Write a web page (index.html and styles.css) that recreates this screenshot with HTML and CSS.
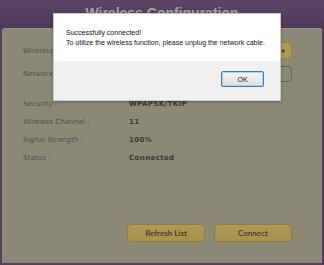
FILE: index.html
```html
<!DOCTYPE html>
<html>
<head>
<meta charset="utf-8">
<link rel="stylesheet" href="styles.css">
</head>
<body>
<div class="app">
  <header class="title">Wireless Configuration</header>
  <main class="panel">
    <div class="row form-row">
      <span class="label">Wireless Network :</span>
      <div class="select"><span class="arrow">&#9660;</span></div>
    </div>
    <div class="row form-row net">
      <span class="label">Network Key :</span>
      <div class="input"></div>
    </div>
    <div class="info">
      <div class="row info-row"><span class="label">Security :</span><span class="value">WPAPSK/TKIP</span></div>
      <div class="row info-row"><span class="label">Wireless Channel :</span><span class="value">11</span></div>
      <div class="row info-row"><span class="label">Signal Strength :</span><span class="value">100%</span></div>
      <div class="row info-row"><span class="label">Status :</span><span class="value">Connected</span></div>
    </div>
    <div class="actions">
      <button class="btn">Refresh List</button>
      <button class="btn">Connect</button>
    </div>
  </main>
</div>
<div class="dialog">
  <div class="dialog-body">
    <p>Successfully connected!</p>
    <p>To utilize the wireless function, please unplug the network cable.</p>
  </div>
  <div class="dialog-foot">
    <button class="ok">OK</button>
  </div>
</div>
</body>
</html>
```
FILE: styles.css
```css
* { box-sizing: border-box; }
html, body { margin: 0; padding: 0; }
body {
  width: 324px;
  height: 265px;
  overflow: hidden;
  background: #4f3b5a;
  font-family: "DejaVu Sans", Verdana, sans-serif;
}
.app {
  display: flex;
  flex-direction: column;
  height: 265px;
  background: #55415f;
}
.title {
  height: 28px;
  padding-top: 5px;
  text-align: center;
  font-family: "Liberation Sans", Arial, sans-serif;
  font-weight: bold;
  font-size: 14px;
  line-height: 16px;
  color: #a89eae;
  background: linear-gradient(#5a4565, #4e3a59);
  border-bottom: 1px solid #4a3755;
  overflow: hidden;
}
.panel {
  flex: 1;
  margin: 0 2px 2px 2px;
  background: #8c8876;
  border-top: 1px solid #9a9684;
  border-radius: 3px 3px 0 0;
  padding: 13px 30px 21px 21px;
  display: flex;
  flex-direction: column;
}
.row {
  display: flex;
  align-items: center;
}
.label {
  width: 106px;
  font-size: 7px;
  color: #514e45;
  letter-spacing: 0.1px;
}
.form-row { height: 17px; }
.form-row.net { margin-top: 7px; height: 16px; }
.select {
  flex: 1;
  height: 17px;
  background: #ad9a51;
  border: 1px solid #978545;
  border-radius: 4px;
  display: flex;
  justify-content: flex-end;
  align-items: center;
  padding-right: 6px;
}
.arrow {
  font-size: 5px;
  color: #3d3622;
}
.input {
  flex: 1;
  height: 16px;
  border: 1px solid #6f5f72;
  border-radius: 4px;
}
.info { margin-top: 13px; }
.info-row { height: 18px; }
.value {
  font-size: 7px;
  font-weight: bold;
  color: #3b382f;
  letter-spacing: 0.4px;
}
.actions {
  margin-top: auto;
  display: flex;
  justify-content: flex-end;
  gap: 9px;
}
.btn {
  width: 78px;
  height: 18px;
  padding: 0;
  font-family: Lato, "Open Sans", sans-serif;
  font-weight: bold;
  font-size: 8px;
  color: #4a4226;
  background: linear-gradient(#ad9b55, #a4924d);
  border: 1px solid #8e7d3e;
  border-radius: 5px;
}
.dialog {
  position: absolute;
  left: 53px;
  top: 13px;
  width: 228px;
  height: 88px;
  background: #fff;
  border: 1px solid #c9c9c9;
  box-shadow: 0 1px 3px rgba(0, 0, 0, 0.25);
  display: flex;
  flex-direction: column;
  font-family: "Liberation Sans", Arial, sans-serif;
}
.dialog-body {
  height: 47px;
  padding: 14px 0 0 12px;
  font-size: 7px;
  line-height: 10px;
  color: #111;
}
.dialog-body p { margin: 0; }
.dialog-foot {
  flex: 1;
  background: #f0f0f0;
  display: flex;
  justify-content: flex-end;
  align-items: flex-start;
  padding: 10px 16px 0 0;
}
.ok {
  width: 43px;
  height: 16px;
  padding: 0;
  font-family: "Liberation Sans", Arial, sans-serif;
  font-size: 7px;
  color: #111;
  background: linear-gradient(#f6f6f6, #dedede);
  border: 1px solid #3c7fb1;
  border-radius: 2px;
  box-shadow: inset 0 0 0 1px #a8d3f0;
}
```
